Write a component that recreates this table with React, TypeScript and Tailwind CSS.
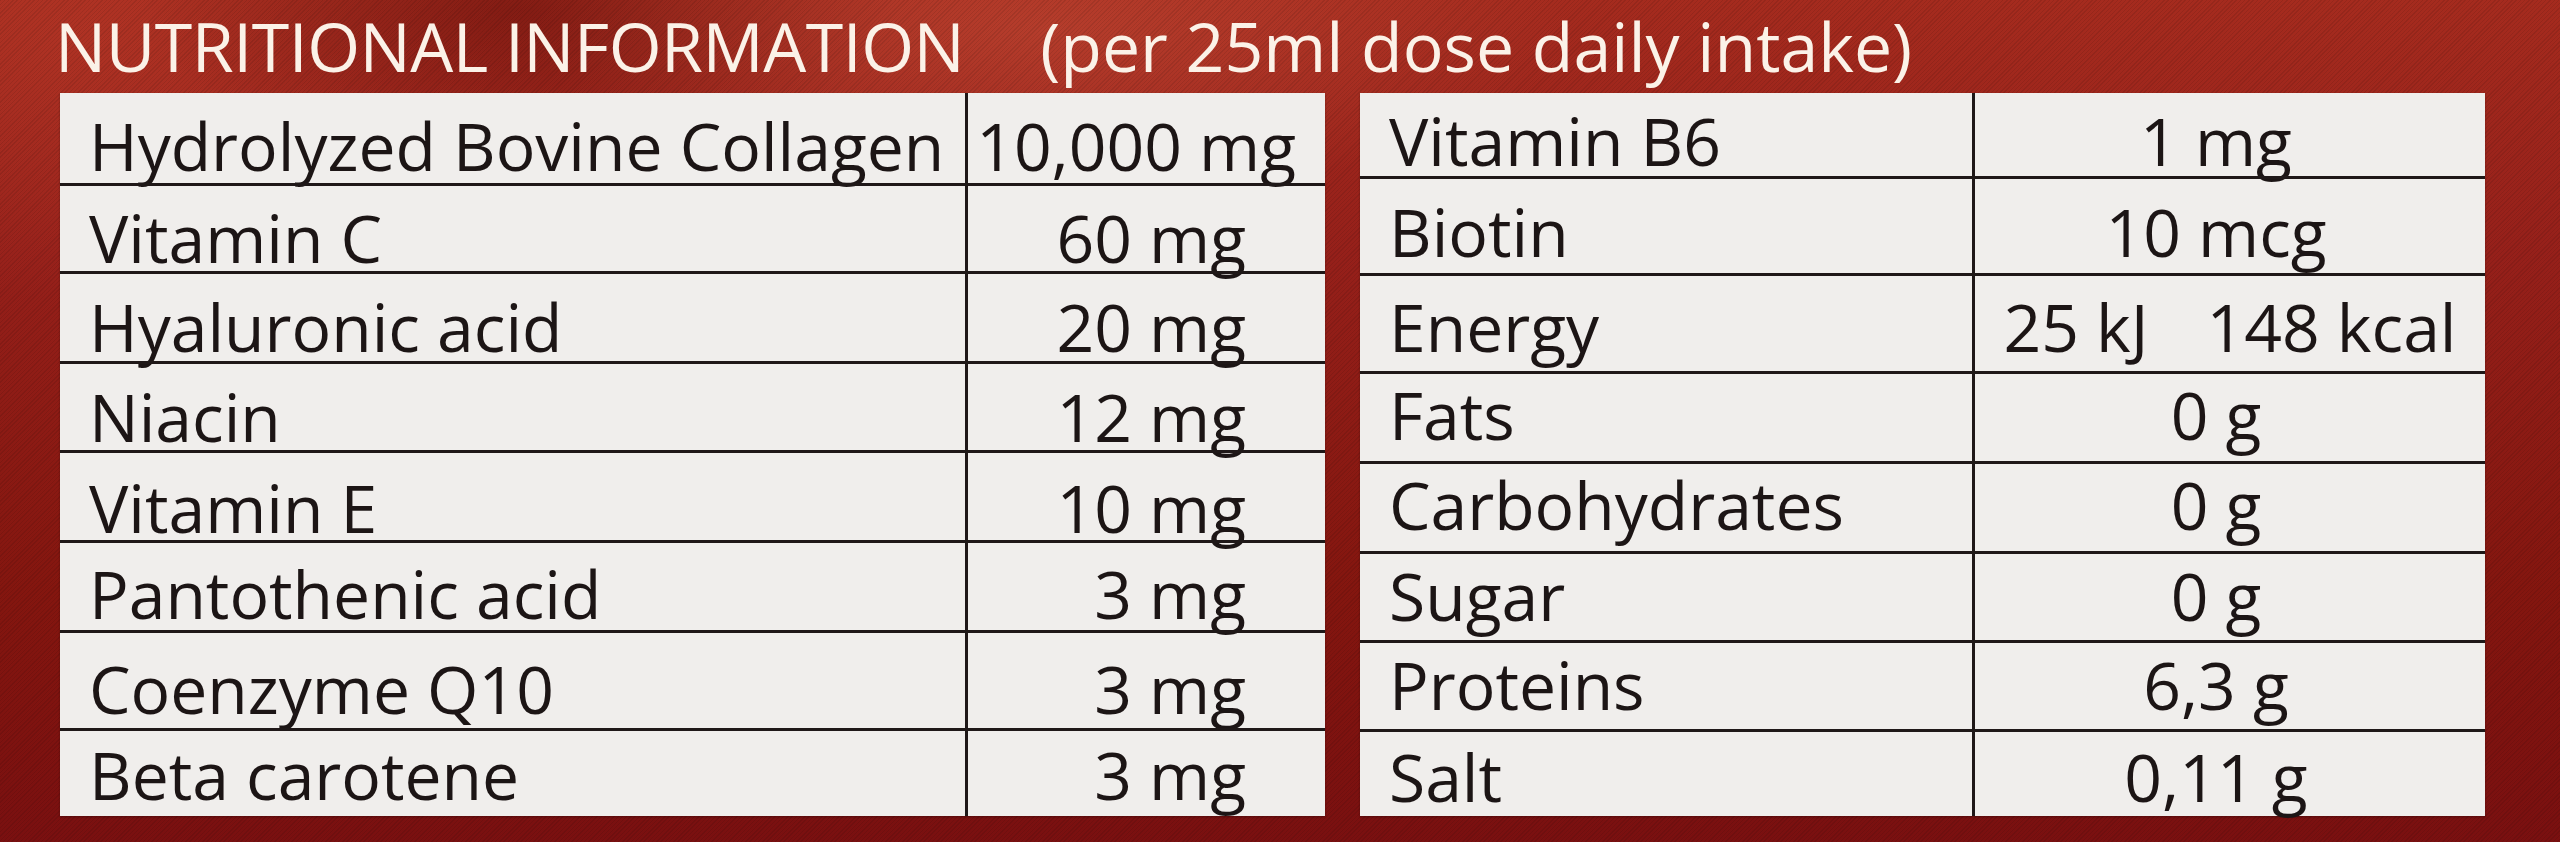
import React from "react";

type Row = { label: string; value: React.ReactNode; h: string; pt: string; vpr?: string };

const left: Row[] = [
  { label: "Hydrolyzed Bovine Collagen", value: "10,000 mg", h: "h-[90px]", pt: "pt-[19px]", vpr: "pr-[29px]" },
  { label: "Vitamin C", value: "60 mg", h: "h-[88px]", pt: "pt-[18px]" },
  { label: "Hyaluronic acid", value: "20 mg", h: "h-[90px]", pt: "pt-[19px]" },
  { label: "Niacin", value: "12 mg", h: "h-[89px]", pt: "pt-[19px]" },
  { label: "Vitamin E", value: "10 mg", h: "h-[90px]", pt: "pt-[21px]" },
  { label: "Pantothenic acid", value: "3 mg", h: "h-[90px]", pt: "pt-[17px]" },
  { label: "Coenzyme Q10", value: "3 mg", h: "h-[98px]", pt: "pt-[22px]" },
  { label: "Beta carotene", value: "3 mg", h: "h-[88px]", pt: "pt-[10px]" },
];

const right: Row[] = [
  { label: "Vitamin B6", value: "1 mg", h: "h-[83px]", pt: "pt-[14px]" },
  { label: "Biotin", value: "10 mcg", h: "h-[97px]", pt: "pt-[19px]" },
  {
    label: "Energy",
    value: (
      <span className="inline-flex gap-[58px]">
        <span>25 kJ</span>
        <span>148 kcal</span>
      </span>
    ),
    h: "h-[98px]",
    pt: "pt-[17px]",
    vpr: "pr-0",
  },
  { label: "Fats", value: "0 g", h: "h-[90px]", pt: "pt-[7px]" },
  { label: "Carbohydrates", value: "0 g", h: "h-[90px]", pt: "pt-[7px]" },
  { label: "Sugar", value: "0 g", h: "h-[89px]", pt: "pt-[8px]" },
  { label: "Proteins", value: "6,3 g", h: "h-[89px]", pt: "pt-[8px]" },
  { label: "Salt", value: "0,11 g", h: "h-[87px]", pt: "pt-[11px]" },
];

function Table({ rows, labelW, align, width }: { rows: Row[]; labelW: string; align: "right" | "center"; width: string }) {
  return (
    <div className={`${width} flex flex-col bg-[#f0eeec] shadow-[0_1px_2px_rgba(0,0,0,0.3)]`}>
      {rows.map((r, i) => (
        <div key={r.label} className={`${r.h} flex ${i > 0 ? "border-t-[3px] border-[#1f1818]" : ""}`}>
          <div className={`${labelW} shrink-0 pl-[29px] ${r.pt}`}>{r.label}</div>
          <div
            className={`flex-1 border-l-[3px] border-[#1f1818] whitespace-nowrap ${r.pt} ${
              align === "right" ? `text-right ${r.vpr ?? "pr-[79px]"}` : `text-center ${r.vpr ?? "pr-[28px]"}`
            }`}
          >
            {r.value}
          </div>
        </div>
      ))}
    </div>
  );
}

export default function App() {
  return (
    <div
      className="relative w-[2560px] h-[842px] overflow-hidden font-['Open_Sans',sans-serif] bg-[#8e1a14] bg-[radial-gradient(ellipse_520px_170px_at_1050px_30px,rgba(214,96,70,0.35),transparent),radial-gradient(ellipse_380px_150px_at_520px_10px,rgba(70,0,0,0.35),transparent),radial-gradient(ellipse_420px_260px_at_80px_40px,rgba(200,70,50,0.3),transparent),linear-gradient(180deg,#a52b1e_0%,#96201a_30%,#84160f_70%,#7a1010_100%)]"
    >
      <div className="pointer-events-none absolute inset-0 bg-[repeating-linear-gradient(135deg,rgba(0,0,0,0.09)_0px,rgba(0,0,0,0.09)_1px,transparent_1px,transparent_3px)]" />
      <div className="relative">
        <div className="flex pl-[55px] h-[93px] text-[68px] leading-[1.362] text-[#fbf2e8]">
          <span className="tracking-[-0.5px]">NUTRITIONAL INFORMATION</span>
          <span className="ml-[76px]">(per 25ml dose daily intake)</span>
        </div>
        <div className="flex items-start pl-[60px] gap-[35px] text-[66px] leading-none text-[#1c1515]">
          <Table rows={left} labelW="w-[905px]" align="right" width="w-[1265px]" />
          <Table rows={right} labelW="w-[612px]" align="center" width="w-[1125px]" />
        </div>
      </div>
    </div>
  );
}
